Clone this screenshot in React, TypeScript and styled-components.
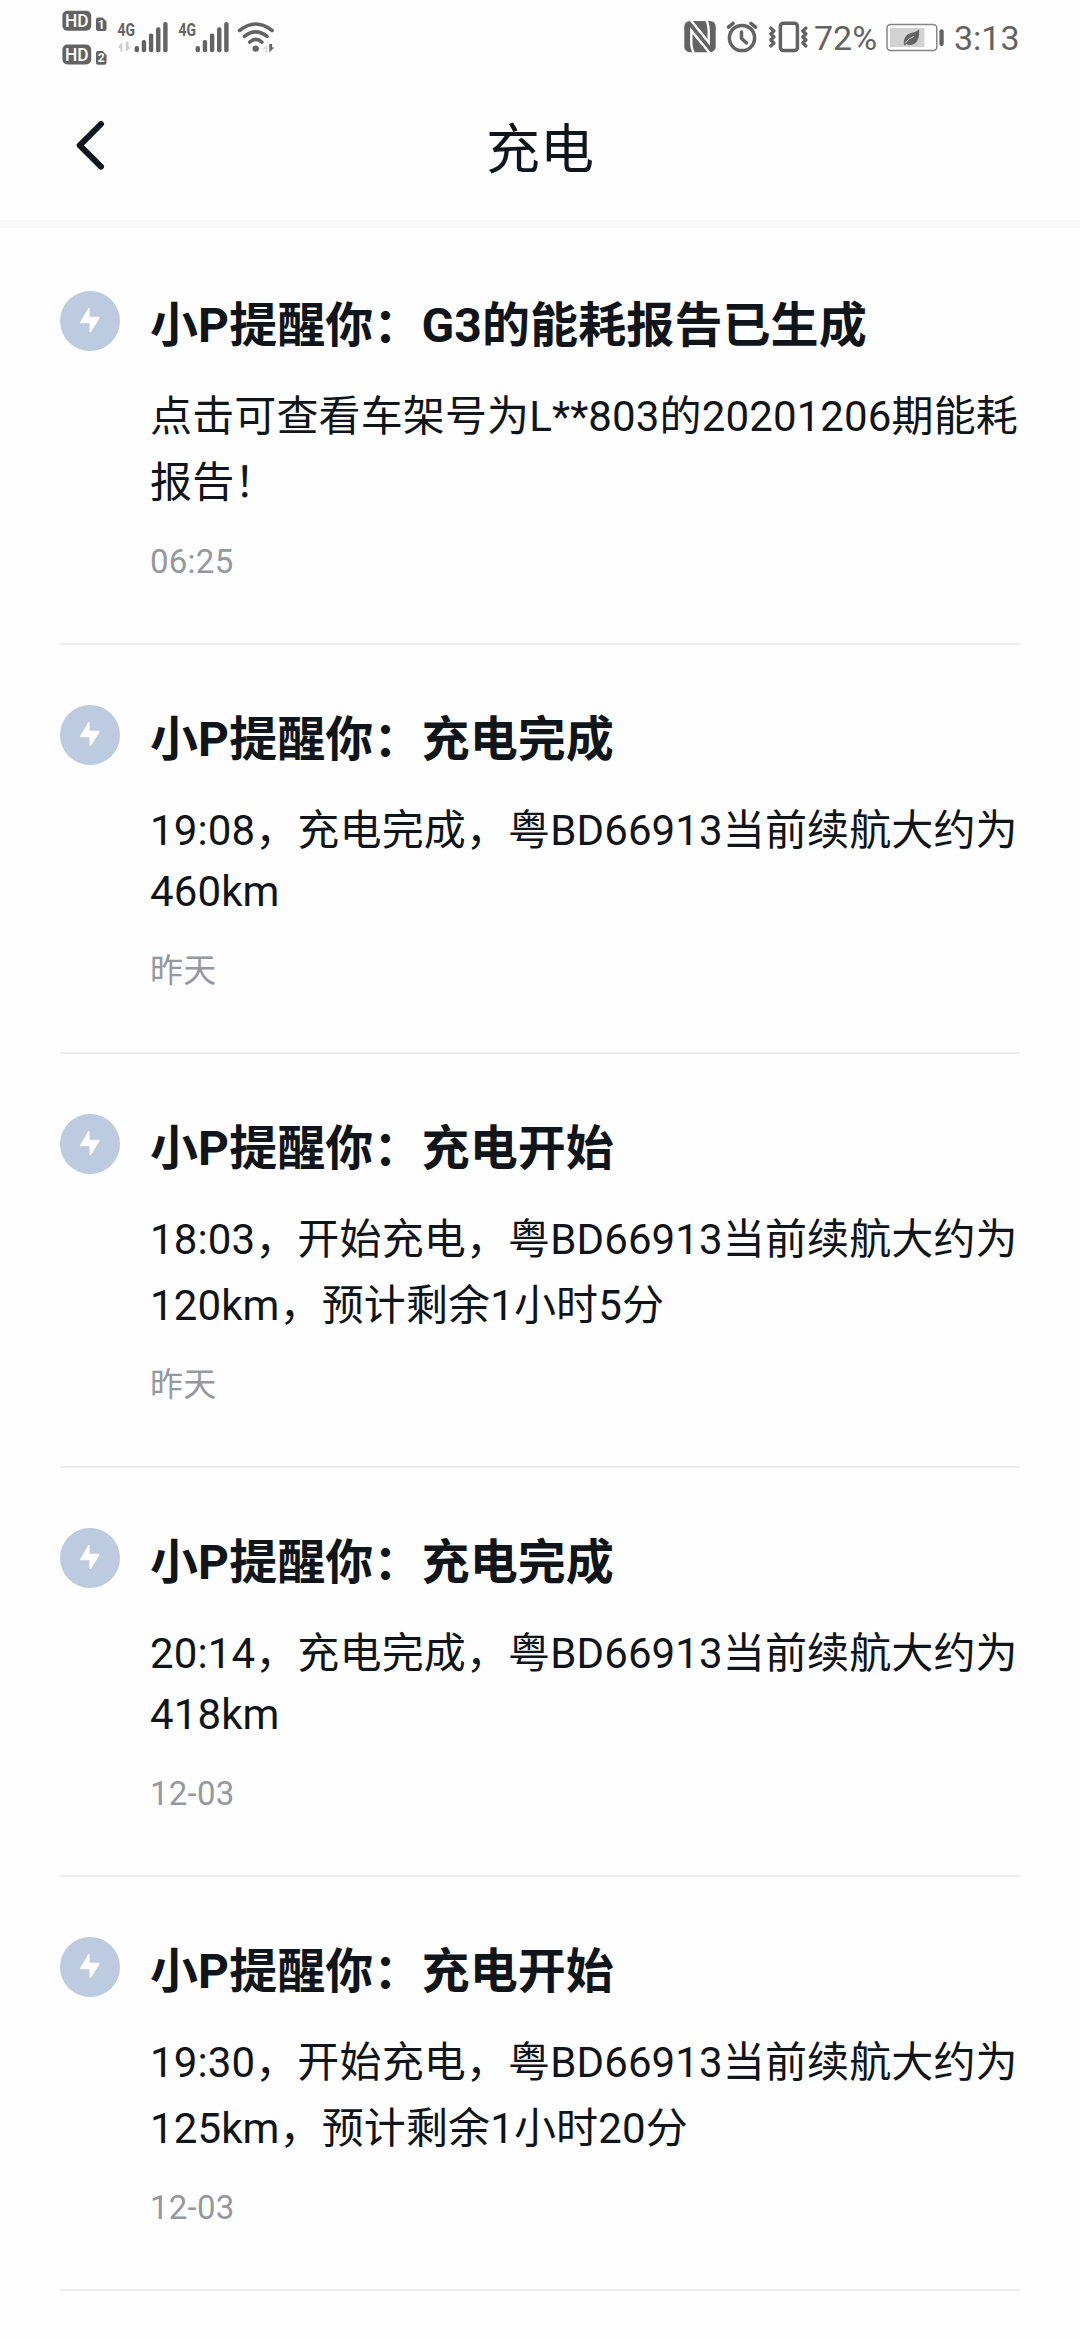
import React from "react";
import styled, { createGlobalStyle } from "styled-components";

const GlobalStyle = createGlobalStyle`
  *, *::before, *::after { box-sizing: border-box; }
  html, body { margin: 0; padding: 0; background: #fefefe; }
  body {
    font-family: Roboto, "Noto Sans CJK SC", sans-serif;
    color: #10141b;
    overflow: hidden;
  }
`;

const Screen = styled.div`
  width: 1080px;
  height: 2340px;
  overflow: hidden;
  background: #fefefe;
`;

const StatusBar = styled.div`
  height: 75px;
  padding: 0 60px;
  display: flex;
  justify-content: space-between;
  color: #636363;
`;

const StatusGroup = styled.div`
  display: flex;
  height: 75px;
`;

const StatusText = styled.span<{ $width: number; $gap: number }>`
  width: ${(p) => p.$width}px;
  margin-left: ${(p) => p.$gap}px;
  font-size: 34px;
  line-height: 76px;
  white-space: nowrap;
`;

const Glyph = styled.svg`
  display: block;
  flex: none;
  overflow: visible;
`;

const Header = styled.header`
  height: 153px;
  display: grid;
  grid-template-columns: 140px 1fr 140px;
  align-items: center;
  border-bottom: 8px solid #f9f9f9;
`;

const BackButton = styled.button`
  border: 0;
  padding: 0 0 0 72px;
  background: none;
  color: #10141b;
  display: flex;
`;

const HeaderTitle = styled.h1`
  margin: 0;
  padding-top: 6px;
  text-align: center;
  font-size: 54px;
  line-height: 80px;
  font-weight: 400;
`;

const List = styled.main`
  padding: 3px 60px 0;
`;

const Item = styled.article`
  display: grid;
  grid-template-columns: 60px 1fr;
  column-gap: 30px;
  padding: 60px 0 58px;
  border-bottom: 2px solid #ebebec;
`;

const Badge = styled.div`
  width: 60px;
  height: 60px;
  border-radius: 50%;
  background: #bccbdf;
  display: flex;
  align-items: center;
  justify-content: center;
`;

const Content = styled.div`
  min-width: 0;
`;

const Title = styled.h2`
  margin: 0;
  height: 92px;
  font-size: 48px;
  line-height: 70px;
  font-weight: 700;
  letter-spacing: 0.1px;
  white-space: nowrap;
`;

const Line = styled.p<{ $latin?: boolean }>`
  margin: 0;
  height: ${(p) => (p.$latin ? 61 : 66)}px;
  line-height: ${(p) => (p.$latin ? 58 : 68)}px;
  font-size: 42px;
  letter-spacing: 0.13px;
  white-space: nowrap;
`;

const Time = styled.time`
  display: block;
  margin-top: 24px;
  height: 46px;
  font-size: 33px;
  line-height: 46px;
  letter-spacing: 0.25px;
  color: #95989e;
`;

function HdIcons() {
  return (
    <Glyph width="58" height="75" viewBox="60 0 58 75" fill="currentColor">
      {[0, 33.7].map((dy, i) => (
        <g key={i} transform={`translate(0 ${dy})`}>
          <rect x="62.4" y="10.8" width="28.8" height="20" rx="5" />
          <text x="65" y="27" fontSize="17.5" fontWeight="500" fill="#fff" textLength="23.6" lengthAdjust="spacingAndGlyphs">HD</text>
          <path d="M96 19.4q0-2 2-2h4.6l3.9 4v7.6q0 2-2 2H98q-2 0-2-2z" />
          <text x="97.8" y="28.8" fontSize="12" fontWeight="700" fill="#fff">{i + 1}</text>
        </g>
      ))}
    </Glyph>
  );
}

function Signal({ arrows, width }: { arrows?: boolean; width: number }) {
  const tops = [46, 40, 33.5, 27.3, 22];
  return (
    <Glyph width={width} height="75" viewBox={`118 0 ${width} 75`} fill="currentColor">
      <text x="117.5" y="35.6" fontSize="18.5" fontWeight="700" textLength="17.5" lengthAdjust="spacingAndGlyphs">4G</text>
      {arrows && <path d="M122.3 42v10h-1.8v-4.2h-3zM125.7 41.5v10.8l5.6-5.6h-2.7v-5.2z" fill="#cfcfcf" />}
      {tops.map((y, i) => (
        <rect key={i} x={134.6 + i * 7.15} y={y} width="4.4" height={52.3 - y} rx="2" />
      ))}
    </Glyph>
  );
}

function Wifi() {
  return (
    <Glyph width="40" height="75" viewBox="237 0 40 75" fill="none" stroke="currentColor" strokeWidth="3.6" strokeLinecap="round">
      <path d="M239.5 30.5q16.3-13 32.6 0M244.5 36.3q11.2-9 22.5 0M249.7 42q6.1-5.2 12.2 0" />
      <circle cx="255.7" cy="48.6" r="3.2" fill="currentColor" stroke="none" />
      <path d="M267.3 44.8v7.5h-1.6V49h-3.2z" fill="#d8d8d8" stroke="none" />
      <path d="M269.3 44v8.4l5-5h-2.2V44z" fill="currentColor" stroke="none" />
    </Glyph>
  );
}

function Nfc() {
  return (
    <Glyph width="42" height="75" viewBox="684 0 42 75">
      <rect x="684.3" y="21" width="31.4" height="31.2" rx="5.5" fill="currentColor" />
      <path d="M691 20.5 708.7 42.3V31.5q0-7-2.3-11" fill="none" stroke="#fefefe" strokeWidth="2.4" />
      <path d="M709.5 52.7 691.3 30.7V42q0 7 2.5 10.7" fill="none" stroke="#fefefe" strokeWidth="2.4" />
    </Glyph>
  );
}

function Alarm() {
  return (
    <Glyph width="42" height="75" viewBox="726 0 42 75" fill="none" stroke="currentColor" strokeWidth="3.5" strokeLinecap="round" strokeLinejoin="round">
      <circle cx="742" cy="38" r="12.6" />
      <path d="M741.5 32v6.5l5 4.3M728.4 27.2l4.7-3.9M755.6 27.2l-4.7-3.9" />
    </Glyph>
  );
}

function Vibrate() {
  return (
    <Glyph width="42" height="75" viewBox="768 0 42 75" fill="none" stroke="currentColor" strokeLinejoin="round" strokeLinecap="round">
      <rect x="780.4" y="23.2" width="17" height="27.4" rx="3" strokeWidth="3.5" />
      <path d="m770.7 28 3.3 3-3.3 3 3.3 3-3.3 3 3.3 3-3.3 3M806 28l-3.3 3 3.3 3-3.3 3 3.3 3-3.3 3 3.3 3" strokeWidth="3.2" />
    </Glyph>
  );
}

function Battery() {
  return (
    <Glyph width="60" height="75" viewBox="885 0 60 75" fill="currentColor">
      <rect x="887" y="24.4" width="49.8" height="26" rx="3.5" fill="none" stroke="#858585" strokeWidth="1.5" />
      <rect x="890" y="28" width="34.4" height="19" fill="#d2d2d2" />
      <rect x="939.4" y="29.2" width="4.3" height="16.8" rx="2" />
      <path d="M919 29.3c.8 8-1.2 15.7-8.8 15.7-1.6 0-2.8-.4-3.7-1l-1.6 1.6-1-1c-.8-8 3.8-11.2 9.2-12.1 2.6-.5 4.5-1.6 5.9-3.2z" />
      <path d="M905.2 43.4q3-5 8.8-7.2" fill="none" stroke="#d2d2d2" strokeWidth="1" />
    </Glyph>
  );
}

function Bolt() {
  return (
    <svg width="60" height="60" viewBox="0 0 60 60" fill="#fff">
      <path d="M28.3 17.2q.8-.7 1.3.2v8.4h9.2q1.2.3.6 1.4l-8.3 13.6q-1 .9-1.6-.2v-8.3h-8.6q-1.3-.3-.7-1.4z" />
    </svg>
  );
}

type Message = { title: string; lines: string[]; time: string };

const messages: Message[] = [
  { title: "小P提醒你：G3的能耗报告已生成", lines: ["点击可查看车架号为L**803的20201206期能耗", "报告！"], time: "06:25" },
  { title: "小P提醒你：充电完成", lines: ["19:08，充电完成，粤BD66913当前续航大约为", "460km"], time: "昨天" },
  { title: "小P提醒你：充电开始", lines: ["18:03，开始充电，粤BD66913当前续航大约为", "120km，预计剩余1小时5分"], time: "昨天" },
  { title: "小P提醒你：充电完成", lines: ["20:14，充电完成，粤BD66913当前续航大约为", "418km"], time: "12-03" },
  { title: "小P提醒你：充电开始", lines: ["19:30，开始充电，粤BD66913当前续航大约为", "125km，预计剩余1小时20分"], time: "12-03" },
];

const isLatin = (text: string) => /^[\x20-\x7e]+$/.test(text);

export default function App() {
  return (
    <Screen lang="zh-CN">
      <GlobalStyle />
      <StatusBar>
        <StatusGroup>
          <HdIcons />
          <Signal arrows width={61} />
          <Signal width={58} />
          <Wifi />
        </StatusGroup>
        <StatusGroup>
          <Nfc />
          <Alarm />
          <Vibrate />
          <StatusText $width={71} $gap={4}>72%</StatusText>
          <Battery />
          <StatusText $width={66} $gap={9}>3:13</StatusText>
        </StatusGroup>
      </StatusBar>
      <Header>
        <BackButton aria-label="返回">
          <svg width="36" height="56" viewBox="0 0 36 56" fill="none" stroke="currentColor" strokeWidth="6" strokeLinecap="round" strokeLinejoin="round">
            <path d="M29 4 7.700 25.300 29 46.600" />
          </svg>
        </BackButton>
        <HeaderTitle>充电</HeaderTitle>
      </Header>
      <List>
        {messages.map((m, i) => (
          <Item key={i}>
            <Badge><Bolt /></Badge>
            <Content>
              <Title>{m.title}</Title>
              {m.lines.map((line) => (
                <Line key={line} $latin={isLatin(line)}>{line}</Line>
              ))}
              <Time>{m.time}</Time>
            </Content>
          </Item>
        ))}
      </List>
    </Screen>
  );
}
